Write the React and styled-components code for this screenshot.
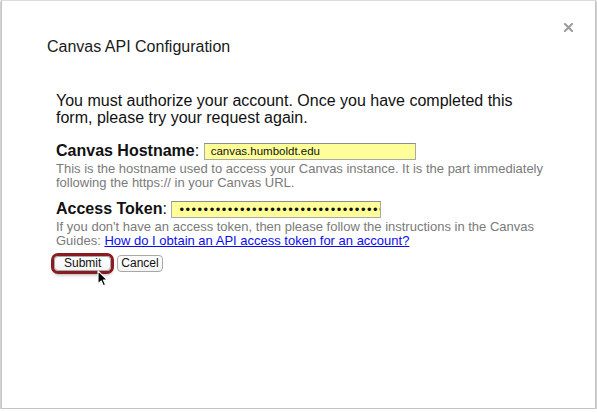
import React from "react";
import styled, { createGlobalStyle } from "styled-components";

const Global = createGlobalStyle`
  html, body { margin: 0; padding: 0; background: #ffffff; }
  body { font-family: "Liberation Sans", Arial, Helvetica, sans-serif; color: #111; }
`;

const Frame = styled.div`
  box-sizing: border-box;
  margin: 0 1px;
  height: 409px;
  background: #fff;
  border: 1px solid #c4c4c4;
  border-top-color: #dcdcdc;
  box-shadow: 0 1px 2px rgba(0, 0, 0, 0.55);
`;

const Header = styled.div`
  display: flex;
  justify-content: space-between;
  align-items: flex-start;
  padding: 0 22px 0 45px;
`;

const Title = styled.h1`
  margin: 37px 0 0;
  font-size: 16px;
  line-height: 18px;
  font-weight: normal;
  color: #1a1a1a;
`;

const Close = styled.button`
  margin-top: 22px;
  width: 9px;
  height: 9px;
  padding: 0;
  border: 0;
  background: none;
  display: flex;
  cursor: pointer;
`;

const Body = styled.div`
  padding: 0 53px 0 54px;
`;

const Intro = styled.p`
  margin: 36px 0 0;
  font-size: 16px;
  line-height: 17px;
  color: #111;
`;

const FieldRow = styled.div`
  display: flex;
  align-items: center;
  gap: 4.5px;
  margin-top: ${(p) => p.$top}px;
  height: 18px;
`;

const Label = styled.label`
  font-size: 16px;
  line-height: 18px;
  color: #111;
  white-space: nowrap;
  strong { font-weight: bold; }
`;

const Field = styled.input`
  box-sizing: border-box;
  width: ${(p) => p.$w}px;
  height: 17px;
  margin: 0;
  padding: 0 0 0 ${(p) => p.$pad}px;
  border: 1px solid #a9a9a9;
  border-top-color: #8e8e8e;
  background: #ffff99;
  font-family: "Liberation Sans", Arial, sans-serif;
  font-size: ${(p) => p.$fs}px;
  letter-spacing: ${(p) => p.$ls || 0}px;
  color: #111;
  outline: none;
`;

const Help = styled.div`
  margin-top: ${(p) => p.$top}px;
  margin-right: -22px;
  font-size: 13px;
  line-height: 14px;
  color: #7a7a7a;
`;

const HelpLink = styled.a`
  display: inline-block;
  line-height: 14px;
  color: #0b0bee;
  text-decoration: underline;
`;

const Buttons = styled.div`
  position: relative;
  display: flex;
  align-items: center;
  gap: 6px;
  height: 17px;
  margin-top: 7px;
  margin-left: -2px;
`;

const Btn = styled.button`
  box-sizing: border-box;
  height: ${(p) => (p.$primary ? 15 : 17)}px;
  padding: 0 ${(p) => (p.$primary ? 9 : 3)}px;
  border: 1px solid #a8a8a8;
  border-radius: 4px;
  background: linear-gradient(#ffffff, #f4f4f4);
  font-family: "Liberation Sans", Arial, sans-serif;
  font-size: 12px;
  line-height: 13px;
  color: #111;
  outline: ${(p) => (p.$primary ? "3px solid #8a1b22" : "none")};
  outline-offset: 0;
  box-shadow: ${(p) => (p.$primary ? "0 3px 4px rgba(0,0,0,0.45)" : "none")};
`;

const Pointer = styled.svg`
  position: absolute;
  left: 43px;
  top: 15px;
  width: 11px;
  height: 17px;
`;

export default function App() {
  return (
    <>
      <Global />
      <Frame>
        <Header>
          <Title>Canvas API Configuration</Title>
          <Close aria-label="Close">
            <svg width="9" height="9" viewBox="0 0 9 9">
              <path d="M1 1 L8 8 M8 1 L1 8" stroke="#9b9b9b" strokeWidth="2" strokeLinecap="square" />
            </svg>
          </Close>
        </Header>
        <Body>
          <Intro>
            You must authorize your account. Once you have completed this form, please try your
            request again.
          </Intro>
          <FieldRow $top={16}>
            <Label>
              <strong>Canvas Hostname</strong>:
            </Label>
            <Field $w={212} $pad={6} $fs={11.5} readOnly value="canvas.humboldt.edu" />
          </FieldRow>
          <Help $top={2}>
            This is the hostname used to access your Canvas instance. It is the part immediately
            following the https:// in your Canvas URL.
          </Help>
          <FieldRow $top={10}>
            <Label>
              <strong>Access Token</strong>:
            </Label>
            <Field
              type="password"
              $w={210}
              $pad={7}
              $fs={13}
              $ls={1.5}
              readOnly
              value="abcdefghijklmnopqrstuvwxyzabcdefghijklmn"
            />
          </FieldRow>
          <Help $top={2}>
            If you don't have an access token, then please follow the instructions in the Canvas
            Guides: <HelpLink href="#">How do I obtain an API access token for an account?</HelpLink>
          </Help>
          <Buttons>
            <Btn $primary>Submit</Btn>
            <Btn>Cancel</Btn>
            <Pointer viewBox="0 0 12 19">
              <path
                d="M1 1 L1 15.5 L4.6 12.2 L7 17.6 L9.4 16.6 L7 11.3 L11.5 11.3 Z"
                fill="#000"
                stroke="#fff"
                strokeWidth="1.2"
                strokeLinejoin="round"
              />
            </Pointer>
          </Buttons>
        </Body>
      </Frame>
    </>
  );
}
